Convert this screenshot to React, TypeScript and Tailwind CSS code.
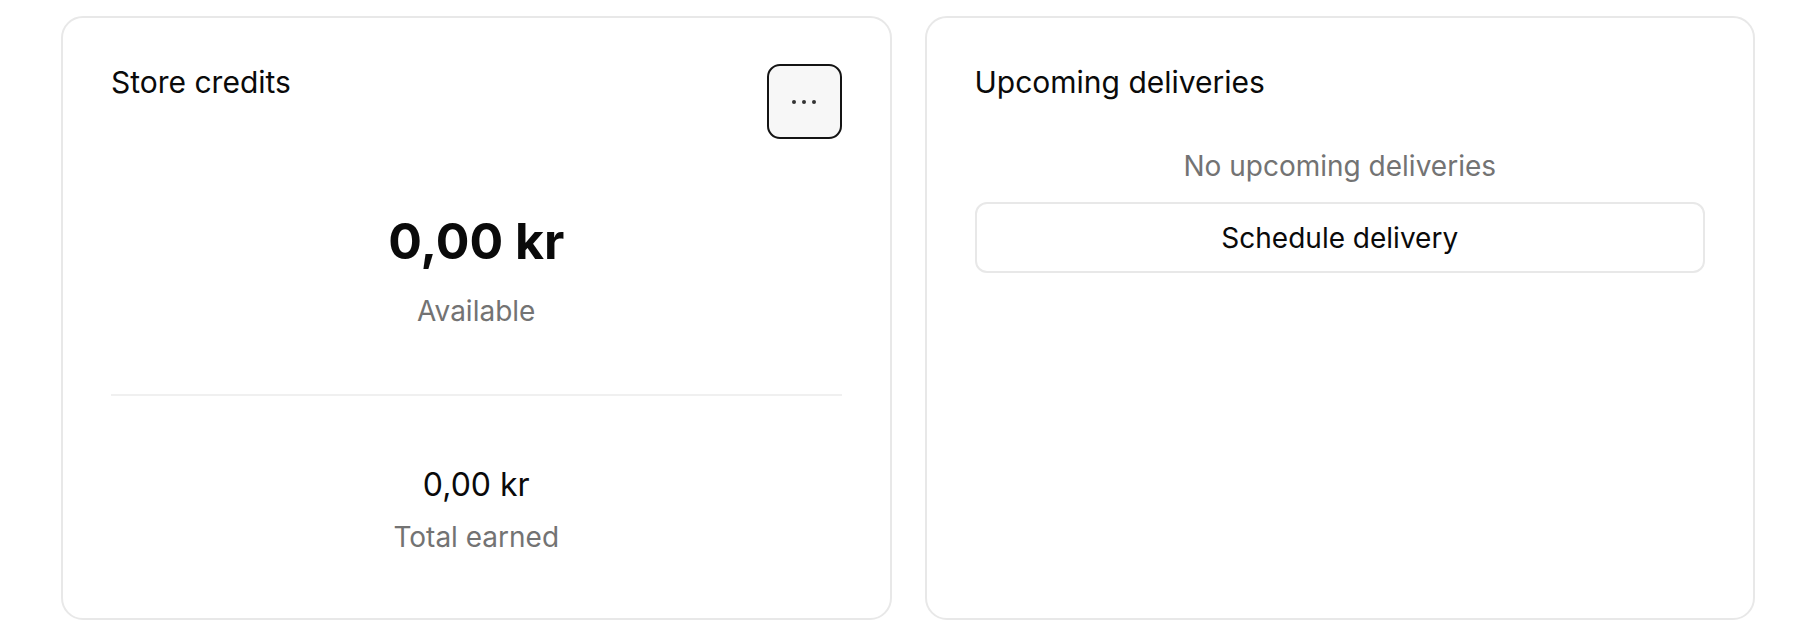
import React from "react";

export default function App() {
  return (
    <div
      className="w-[1798px] h-[644px] bg-white flex gap-[33px] pl-[61px] pr-[43px] pt-[16px]"
      style={{ fontFamily: "Inter, 'Noto Sans', sans-serif" }}
    >
      {/* Store credits */}
      <div className="flex-1 h-[604px] border-2 border-[#e8e8e8] rounded-[22px] pt-[46px] px-[48px] flex flex-col">
        <div className="flex items-start justify-between">
          <h2 className="text-[30px] leading-[36px] text-[#0a0a0a] font-normal">Store credits</h2>
          <button className="w-[75px] h-[75px] rounded-[13px] border-2 border-[#141414] bg-[#f7f7f7] flex items-center justify-center gap-[6px]">
            <span className="w-[4px] h-[4px] rounded-full bg-[#333]" />
            <span className="w-[4px] h-[4px] rounded-full bg-[#333]" />
            <span className="w-[4px] h-[4px] rounded-full bg-[#333]" />
          </button>
        </div>
        <div className="mt-[77px] flex flex-col items-center">
          <div className="text-[50px] leading-[50px] font-bold text-[#0a0a0a]">0,00 kr</div>
          <div className="mt-[27px] text-[28px] leading-[36px] text-[#737373]">Available</div>
        </div>
        <div className="mt-[65px] h-[1.5px] bg-[#f0f0f0]" />
        <div className="mt-[69px] flex flex-col items-center">
          <div className="text-[32px] leading-[40px] text-[#0a0a0a]">0,00 kr</div>
          <div className="mt-[14px] text-[28px] leading-[36px] text-[#737373]">Total earned</div>
        </div>
      </div>

      {/* Upcoming deliveries */}
      <div className="flex-1 h-[604px] border-2 border-[#e8e8e8] rounded-[22px] pt-[46px] px-[48px] flex flex-col">
        <h2 className="text-[30px] leading-[36px] text-[#0a0a0a] font-normal">Upcoming deliveries</h2>
        <div className="mt-[48px] text-center text-[28px] leading-[36px] text-[#737373]">No upcoming deliveries</div>
        <button className="mt-[18px] h-[71px] w-full rounded-[12px] border-2 border-[#e8e8e8] bg-white text-[28px] leading-[36px] text-[#0a0a0a] flex items-center justify-center">
          Schedule delivery
        </button>
      </div>
    </div>
  );
}
